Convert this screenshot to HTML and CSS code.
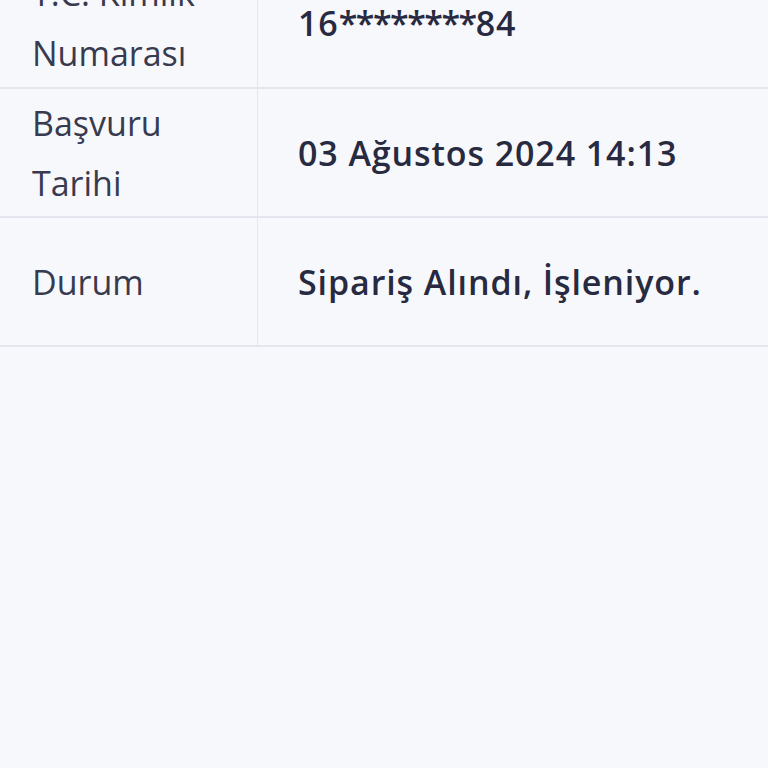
FILE: index.html
```html
<!DOCTYPE html>
<html lang="tr">
<head>
    <meta charset="UTF-8">
    <meta name="viewport" content="width=device-width, initial-scale=1.0">
    <title>Başvuru Detayı</title>
    <link rel="stylesheet" href="styles.css">
</head>
<body>
    <table class="details">
        <tr>
            <th>T.C. Kimlik Numarası</th>
            <td>16<span class="mask">********</span>84</td>
        </tr>
        <tr>
            <th>Başvuru Tarihi</th>
            <td>03 Ağustos 2024 14:13</td>
        </tr>
        <tr>
            <th>Durum</th>
            <td>Sipariş Alındı, İşleniyor.</td>
        </tr>
    </table>
</body>
</html>
```

FILE: styles.css
```css
html, body {
    background-color: #f7f8fb;
}
body {
    margin: 0;
    font-family: "Open Sans", Lato, sans-serif;
    color: #272a40;
}
.details {
    width: 100%;
    margin-top: -41px;
    border-collapse: collapse;
}
.details tr {
    height: 129px;
    border-bottom: 2px solid #e4e6ee;
}
.details th,
.details td {
    vertical-align: middle;
    font-size: 34px;
    line-height: 60px;
    text-align: left;
    padding: 0;
}
.details th {
    width: 205px;
    padding-left: 32px;
    padding-right: 20px;
    font-weight: normal;
    color: #383b4f;
    border-right: 1px solid #e4e6ee;
}
.details td {
    padding-left: 40px;
    font-weight: 600;
    letter-spacing: 0.9px;
}
.mask {
    letter-spacing: -1.5px;
}
```
